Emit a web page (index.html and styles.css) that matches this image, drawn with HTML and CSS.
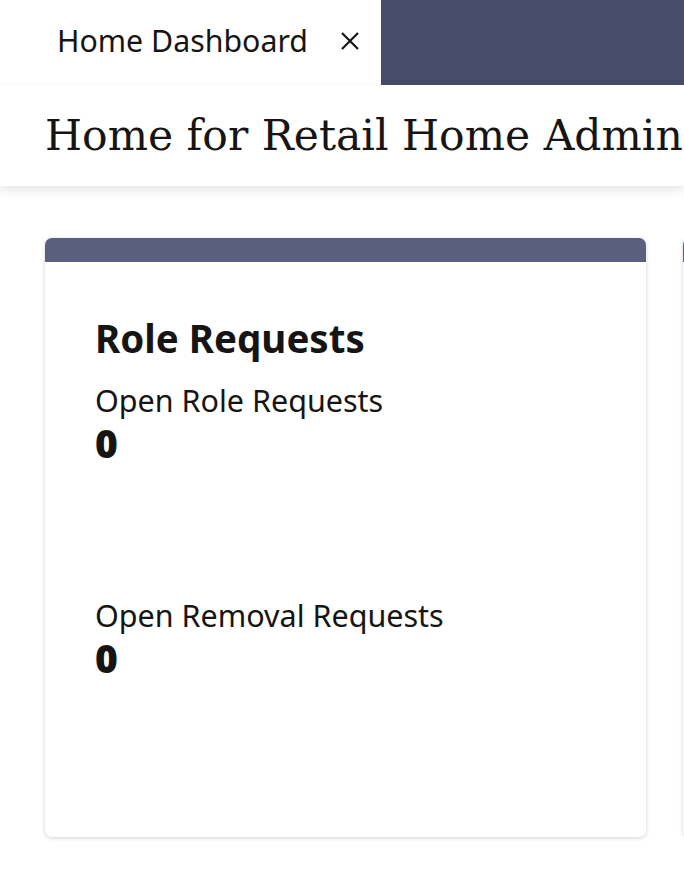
FILE: index.html
```html
<!DOCTYPE html>
<html lang="en">
<head>
<meta charset="utf-8">
<title>Home Dashboard</title>
<link rel="stylesheet" href="styles.css">
</head>
<body>
<div class="tabbar">
  <div class="tab">
    <span class="tab-label">Home Dashboard</span>
    <svg class="tab-close" width="20" height="20" viewBox="0 0 20 20" aria-label="Close">
      <path d="M2 2 L18 18 M18 2 L2 18" stroke="#161513" stroke-width="2.2" fill="none"/>
    </svg>
  </div>
  <div class="tab-fill"></div>
</div>
<header class="page-header">
  <h1 class="page-title">Home for Retail Home Admin</h1>
</header>
<main class="content">
  <section class="card">
    <div class="card-strip"></div>
    <div class="card-body">
      <h2 class="card-title">Role Requests</h2>
      <div class="metric">
        <div class="metric-label">Open Role Requests</div>
        <div class="metric-value">0</div>
      </div>
      <div class="metric">
        <div class="metric-label">Open Removal Requests</div>
        <div class="metric-value">0</div>
      </div>
    </div>
  </section>
  <section class="card">
    <div class="card-strip"></div>
    <div class="card-body"></div>
  </section>
</main>
</body>
</html>
```
FILE: styles.css
```css
html, body {
  margin: 0;
  padding: 0;
  background: #ffffff;
  overflow: hidden;
}
body {
  font-family: "Noto Sans", "Open Sans", sans-serif;
  color: #161513;
  width: 684px;
  height: 888px;
}
.tabbar {
  display: flex;
  height: 85px;
}
.tab {
  width: 381px;
  display: flex;
  align-items: center;
  padding-left: 57px;
  box-sizing: border-box;
  gap: 32px;
  background: #fff;
}
.tab-label {
  font-size: 30.3px;
  line-height: 1;
  padding-bottom: 3px;
  white-space: nowrap;
}
.tab-close {
  display: block;
  flex: none;
  margin-bottom: 4px;
}
.tab-fill {
  flex: 1;
  background: #474c6b;
}
.page-header {
  height: 101px;
  background: #fff;
  position: relative;
  z-index: 1;
  box-shadow: 0 4px 10px rgba(0, 0, 0, 0.10);
}
.page-title {
  margin: 0;
  padding-left: 45px;
  padding-top: 21px;
  font-family: "DejaVu Serif", Georgia, serif;
  font-weight: normal;
  font-size: 42.5px;
  line-height: 60px;
  white-space: nowrap;
}
.content {
  display: grid;
  grid-template-columns: 601px 601px;
  gap: 37px;
  padding: 52px 0 0 45px;
}
.card {
  height: 599px;
  border-radius: 7px;
  background: #fff;
  box-shadow: 0 1px 4px rgba(0, 0, 0, 0.18);
  overflow: hidden;
  display: flex;
  flex-direction: column;
}
.card-strip {
  height: 24px;
  background: #5a5f80;
}
.card-body {
  padding: 54px 50px 0 50px;
}
.card-title {
  margin: 0 0 22px 0;
  font-size: 38.5px;
  font-weight: 700;
  line-height: 44px;
  white-space: nowrap;
}
.metric {
  height: 215px;
}
.metric-label {
  font-size: 30.5px;
  line-height: 36px;
  white-space: nowrap;
}
.metric-value {
  font-size: 39px;
  font-weight: 900;
  line-height: 50px;
}
```
